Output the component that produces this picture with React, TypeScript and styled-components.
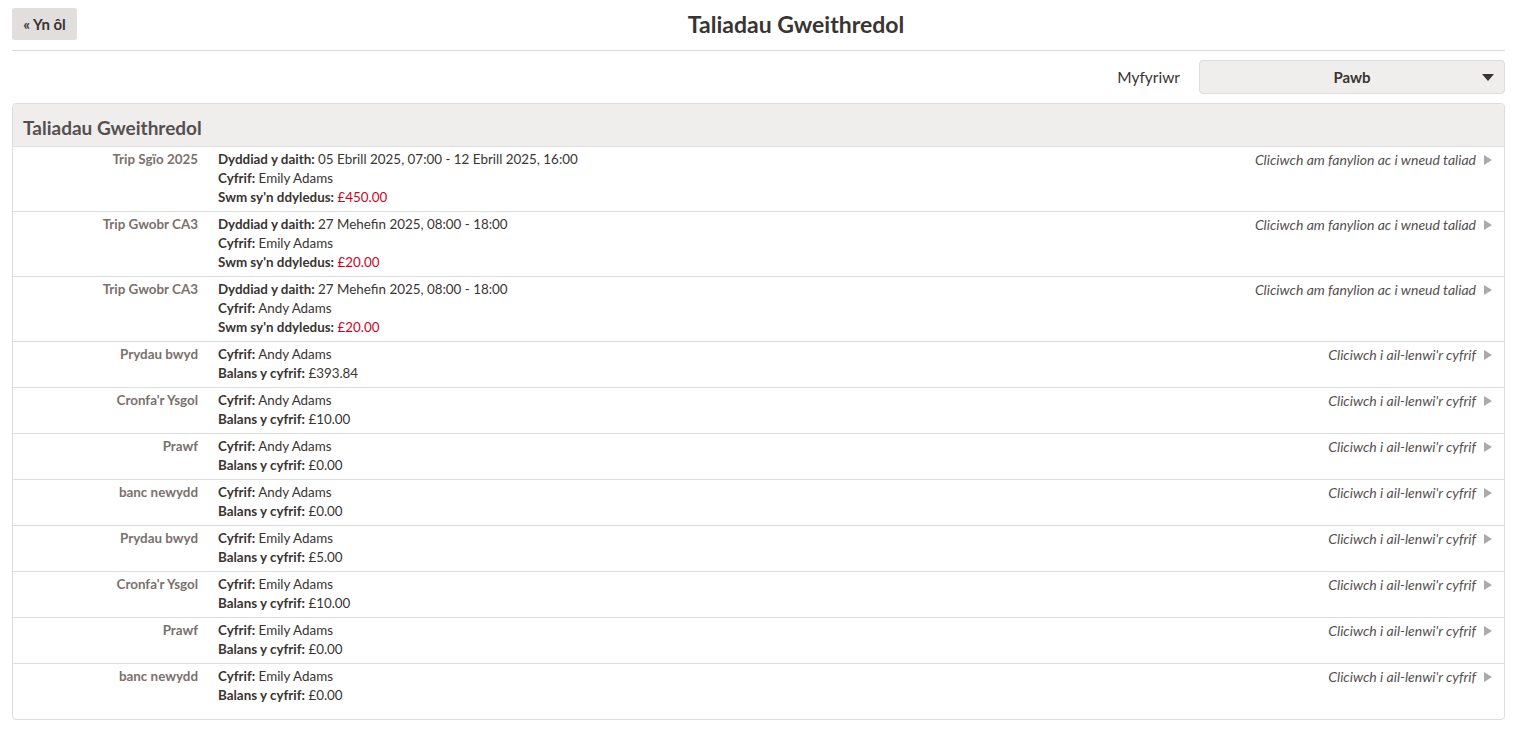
import React from "react";
import styled, { createGlobalStyle } from "styled-components";

const GlobalStyle = createGlobalStyle`
  html, body {
    margin: 0;
    padding: 0;
    background: #fff;
  }
  body {
    font-family: "Lato", "Noto Sans", sans-serif;
    font-size: 13.4px;
    color: #3a3432;
  }
`;

const Page = styled.div`
  padding: 8px 10px 0 12px;
`;

const TopBar = styled.div`
  display: flex;
  align-items: center;
  height: 32px;
  padding-bottom: 10px;
  border-bottom: 1px solid #dddddd;
`;

const BackButton = styled.button`
  height: 32px;
  width: 65px;
  padding: 0;
  border: none;
  border-radius: 3px;
  background: #e2dede;
  color: #3a3432;
  font-family: inherit;
  font-size: 15px;
  font-weight: 700;
  cursor: pointer;
`;

const Title = styled.h1`
  flex: 1;
  margin: 0;
  padding-left: 10px;
  text-align: center;
  font-size: 23px;
  font-weight: 700;
  color: #3a3432;
`;

const FilterRow = styled.div`
  display: flex;
  justify-content: flex-end;
  align-items: center;
  gap: 19px;
  margin-top: 9px;
`;

const FilterLabel = styled.span`
  font-size: 15.5px;
  color: #3a3432;
`;

const Select = styled.div`
  position: relative;
  width: 304px;
  height: 32px;
  border: 1px solid #dddddd;
  border-radius: 4px;
  background: #efeeed;
  display: flex;
  align-items: center;
  justify-content: center;
  font-size: 15px;
  font-weight: 700;
  color: #3a3432;
`;

const Caret = styled.span`
  position: absolute;
  right: 10px;
  top: 13px;
  width: 0;
  height: 0;
  border-left: 6px solid transparent;
  border-right: 6px solid transparent;
  border-top: 7px solid #3a3432;
`;

const Panel = styled.section`
  margin-top: 9px;
  border: 1px solid #dddddd;
  border-radius: 4px;
  padding-bottom: 10px;
`;

const PanelHeader = styled.h2`
  margin: 0;
  height: 43px;
  display: flex;
  align-items: center;
  padding: 0 10px;
  padding-top: 5px;
  box-sizing: border-box;
  background: #efeeed;
  border-bottom: 1px solid #dddddd;
  border-radius: 4px 4px 0 0;
  font-size: 19px;
  font-weight: 700;
  color: #555050;
`;

const Row = styled.div<{ $last?: boolean }>`
  display: grid;
  grid-template-columns: 185px 1fr auto;
  column-gap: 20px;
  padding: 3px 12px 4px 0;
  line-height: 19px;
  border-bottom: ${(p) => (p.$last ? "none" : "1px solid #dddddd")};
  cursor: pointer;
`;

const RowLabel = styled.div`
  text-align: right;
  font-weight: 700;
  color: #7a716d;
`;

const Details = styled.div`
  display: flex;
  flex-direction: column;
`;

const Key = styled.strong`
  font-weight: 700;
  color: #3a3432;
`;

const Amount = styled.span<{ $due?: boolean }>`
  color: ${(p) => (p.$due ? "#d0021b" : "#3a3432")};
`;

const Action = styled.div`
  display: flex;
  align-items: flex-start;
  gap: 8px;
  font-size: 14px;
  font-style: italic;
  color: #555050;
`;

const Arrow = styled.span`
  margin-top: 5px;
  width: 0;
  height: 0;
  border-top: 5px solid transparent;
  border-bottom: 5px solid transparent;
  border-left: 8px solid #aaaaaa;
`;

type Item = {
  name: string;
  account: string;
  date?: string;
  due?: string;
  balance?: string;
};

const items: Item[] = [
  { name: "Trip Sgïo 2025", date: "05 Ebrill 2025, 07:00 - 12 Ebrill 2025, 16:00", account: "Emily Adams", due: "£450.00" },
  { name: "Trip Gwobr CA3", date: "27 Mehefin 2025, 08:00 - 18:00", account: "Emily Adams", due: "£20.00" },
  { name: "Trip Gwobr CA3", date: "27 Mehefin 2025, 08:00 - 18:00", account: "Andy Adams", due: "£20.00" },
  { name: "Prydau bwyd", account: "Andy Adams", balance: "£393.84" },
  { name: "Cronfa'r Ysgol", account: "Andy Adams", balance: "£10.00" },
  { name: "Prawf", account: "Andy Adams", balance: "£0.00" },
  { name: "banc newydd", account: "Andy Adams", balance: "£0.00" },
  { name: "Prydau bwyd", account: "Emily Adams", balance: "£5.00" },
  { name: "Cronfa'r Ysgol", account: "Emily Adams", balance: "£10.00" },
  { name: "Prawf", account: "Emily Adams", balance: "£0.00" },
  { name: "banc newydd", account: "Emily Adams", balance: "£0.00" },
];

export default function App() {
  return (
    <>
      <GlobalStyle />
      <Page>
        <TopBar>
          <BackButton>« Yn ôl</BackButton>
          <Title>Taliadau Gweithredol</Title>
        </TopBar>
        <FilterRow>
          <FilterLabel>Myfyriwr</FilterLabel>
          <Select>
            Pawb
            <Caret />
          </Select>
        </FilterRow>
        <Panel>
          <PanelHeader>Taliadau Gweithredol</PanelHeader>
          {items.map((item, i) => (
            <Row key={i} $last={i === items.length - 1}>
              <RowLabel>{item.name}</RowLabel>
              <Details>
                {item.date && (
                  <div>
                    <Key>Dyddiad y daith:</Key> {item.date}
                  </div>
                )}
                <div>
                  <Key>Cyfrif:</Key> {item.account}
                </div>
                {item.due ? (
                  <div>
                    <Key>Swm sy'n ddyledus:</Key> <Amount $due>{item.due}</Amount>
                  </div>
                ) : (
                  <div>
                    <Key>Balans y cyfrif:</Key> <Amount>{item.balance}</Amount>
                  </div>
                )}
              </Details>
              <Action>
                {item.due ? "Cliciwch am fanylion ac i wneud taliad" : "Cliciwch i ail-lenwi'r cyfrif"}
                <Arrow />
              </Action>
            </Row>
          ))}
        </Panel>
      </Page>
    </>
  );
}
